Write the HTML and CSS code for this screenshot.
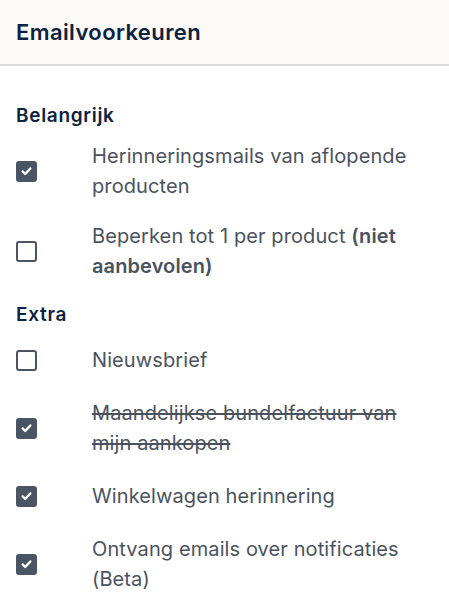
FILE: index.html
```html
<!DOCTYPE html>
<html lang="nl">
<head>
<meta charset="utf-8">
<link rel="stylesheet" href="styles.css">
</head>
<body>
<div class="page">
  <header class="header"><h1 class="title">Emailvoorkeuren</h1></header>
  <main class="content">
    <h2 class="group-title">Belangrijk</h2>
    <ul class="list list-main">
      <li class="row"><span class="box checked"><svg viewBox="0 0 20 20" class="tick"><path d="M5.5 10.5l3 3 6-6.5" /></svg></span><span class="label">Herinneringsmails van aflopende producten</span></li>
      <li class="row"><span class="box"></span><span class="label">Beperken tot 1 per product <b>(niet</b> <b>aanbevolen)</b></span></li>
    </ul>
    <h2 class="group-title group-extra">Extra</h2>
    <ul class="list list-extra">
      <li class="row"><span class="box"></span><span class="label">Nieuwsbrief</span></li>
      <li class="row"><span class="box checked"><svg viewBox="0 0 20 20" class="tick"><path d="M5.5 10.5l3 3 6-6.5" /></svg></span><span class="label strike">Maandelijkse bundelfactuur van mijn aankopen</span></li>
      <li class="row"><span class="box checked"><svg viewBox="0 0 20 20" class="tick"><path d="M5.5 10.5l3 3 6-6.5" /></svg></span><span class="label">Winkelwagen herinnering</span></li>
      <li class="row"><span class="box checked"><svg viewBox="0 0 20 20" class="tick"><path d="M5.5 10.5l3 3 6-6.5" /></svg></span><span class="label">Ontvang emails over notificaties (Beta)</span></li>
    </ul>
  </main>
</div>
</body>
</html>
```
FILE: styles.css
```css
html, body { margin: 0; padding: 0; background: #ffffff; }
body { font-family: Inter, "Noto Sans", "Liberation Sans", sans-serif; color: #4a5260; }
.page { width: 449px; }
.header {
  background: #fbfaf9;
  height: 64px;
  border-bottom: 2px solid #dcdcdc;
  display: flex;
  align-items: center;
  padding: 0 16px;
}
.title { margin: 0; font-size: 22px; font-weight: 600; color: #0d2240; letter-spacing: 0.4px; }
.content { padding: 36px 16px 0 16px; }
.group-title { margin: 0 0 11px 0; font-size: 19px; font-weight: 600; color: #0d2240; line-height: 28px; letter-spacing: 0.7px; }
.group-extra { margin-bottom: 16px; }
.list { list-style: none; margin: 0; padding: 0; display: flex; flex-direction: column; }
.list-main { gap: 20px; margin-bottom: 20px; }
.list-extra { gap: 23px; }
.row { display: flex; align-items: center; }
.box {
  flex: 0 0 auto;
  width: 17px; height: 17px;
  border: 2px solid #4a5563;
  border-radius: 3px;
  margin-right: 55px;
  display: flex; align-items: center; justify-content: center;
}
.box.checked { background: #4a5563; }
.tick { width: 20px; height: 20px; fill: none; stroke: #ffffff; stroke-width: 2.8; stroke-linecap: round; stroke-linejoin: round; }
.label { flex: 1 1 auto; font-size: 20px; line-height: 30px; letter-spacing: 0.1px; }
.label b { font-weight: 600; }
.strike { text-decoration: line-through; }
```
